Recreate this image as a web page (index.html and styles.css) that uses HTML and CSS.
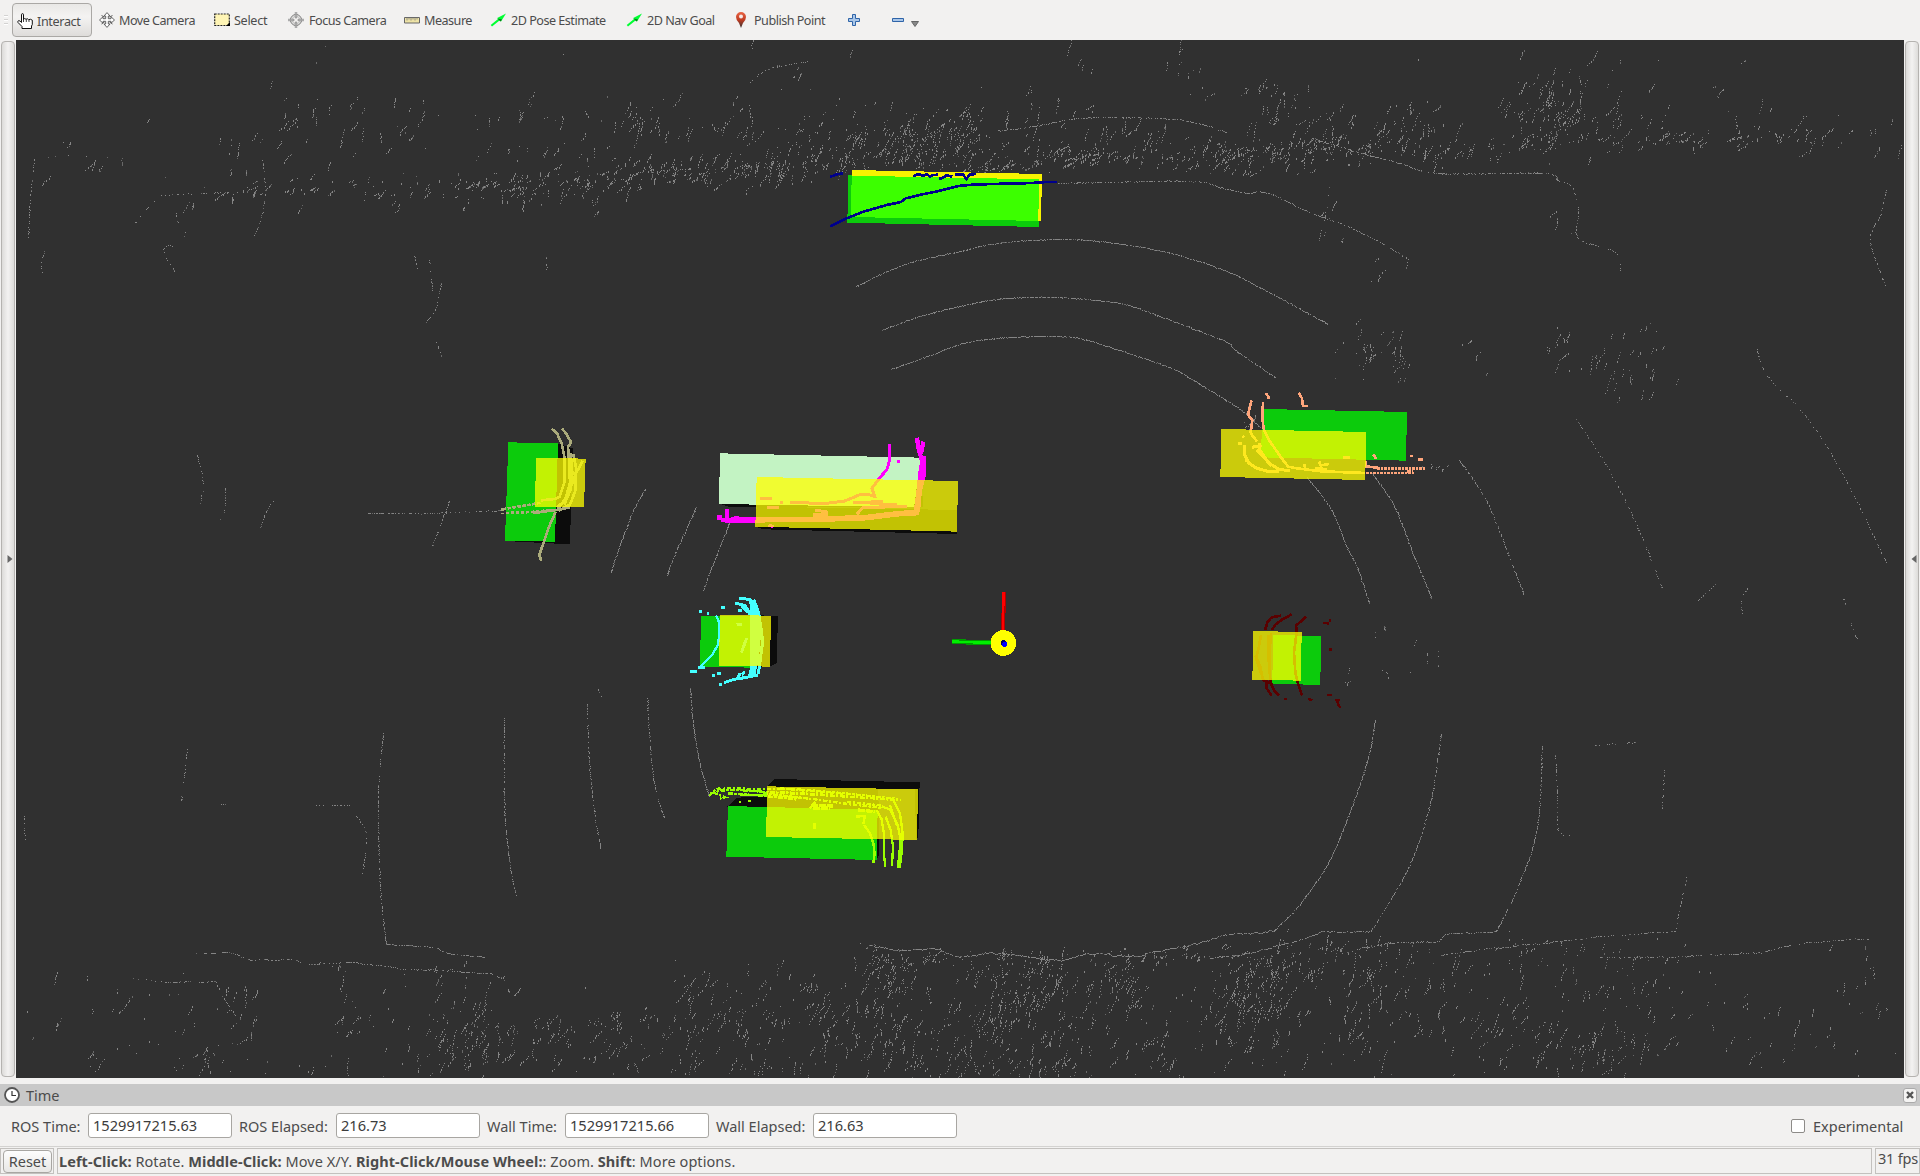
FILE: index.html
```html
<!DOCTYPE html>
<html lang="en">
<head>
<meta charset="utf-8">
<title>RViz</title>
<link rel="stylesheet" href="styles.css">
</head>
<body>
<div class="app">
  <header class="toolbar">
    <div class="grip"><i></i><i></i><i></i></div>
    <button class="tool t-interact active"><svg width="16" height="16" viewBox="0 0 16 16"><path d="M4.5 9.5V1.8Q4.5.6 5.5.6T6.5 1.8V6.5Q7.6 4.6 9 6.3 10.3 5 11.6 6.7 13.5 5.600 15.300 7.200V11.500L14.500 13V15.500H5V13.500L1 9.500Q.3 8 1.800 7.600 3 7.600 4.500 9.500Z" fill="#fff" stroke="#111"/><path d="M6.500 6v3M9.300 6.500V9M12 7v2" stroke="#111" stroke-width=".8"/></svg><span>Interact</span></button>
    <button class="tool t-move"><svg width="16" height="16" viewBox="0 0 16 16" fill="#fff" stroke="#555" stroke-width=".9"><path d="M8 .6 11 4H9.300V6.700H12V4.800L15.500 8 12 11.200V9.300H9.300V12H11L8 15.400 5 12H6.700V9.300H4V11.200L.5 8 4 4.800V6.700H6.700V4H5Z"/><path d="m2.500 3.500 3 1.500M13.500 3.500l-3 1.500M2.500 12l3-2M13.500 12l-3-2"/></svg><span>Move Camera</span></button>
    <button class="tool t-select"><svg width="16" height="16" viewBox="0 0 16 16"><path d="M.7 2h14.600v11.500H.7z" fill="#fff5b5" stroke="#222" stroke-width="1.200" stroke-dasharray="2 1"/><path d="M16 10v4h-4z"/></svg><span>Select</span></button>
    <button class="tool t-focus"><svg width="16" height="16" viewBox="0 0 16 16" fill="none" stroke="#777"><circle cx="8" cy="8" r="5.500"/><circle cx="8" cy="8" r="3.800" stroke="#aaa" stroke-width=".7"/><path d="M7.300 0v6h1.400V0M7.300 16v-6h1.400v6M0 7.300h6v1.400H0M16 7.300h-6v1.400h6" fill="#eee" stroke-width=".7"/></svg><span>Focus Camera</span></button>
    <button class="tool t-measure"><svg width="16" height="16" viewBox="0 0 16 16"><path d="M.5 5.500h15v5.500H.5z" fill="#eee3a6" stroke="#666"/><path d="M3 5.500v3M5 5.500v2M7 5.500v3M9 5.500v2M11 5.500v3M13 5.500v2" stroke="#777" stroke-width=".8"/></svg><span>Measure</span></button>
    <button class="tool t-pose"><svg width="17" height="16" viewBox="0 0 17 16"><path d="M16 1.500 11 9.500 9.500 8.500 2 14.500.7 13 8 7 7.200 6Z" fill="#0f3"/><path d="m7.500 6.500 3 3 1.500-2Z" fill="#087a18"/></svg><span>2D Pose Estimate</span></button>
    <button class="tool t-nav"><svg width="17" height="16" viewBox="0 0 17 16"><path d="M16 1.500 11 9.500 9.500 8.500 2 14.500.7 13 8 7 7.200 6Z" fill="#0f3"/><path d="m7.500 6.500 3 3 1.500-2Z" fill="#087a18"/></svg><span>2D Nav Goal</span></button>
    <button class="tool t-point"><svg width="12" height="16" viewBox="0 0 12 16"><defs><linearGradient id="pin" x2="0" y2="1"><stop stop-color="#ea6545"/><stop offset=".5" stop-color="#bf3c22"/><stop offset="1" stop-color="#333"/></linearGradient></defs><path d="M6 0A5 5 0 0 1 11 5Q11 8 8 11L6 16 4 11Q1 8 1 5A5 5 0 0 1 6 0Z" fill="url(#pin)"/><circle cx="6" cy="4.500" r="2" fill="#f7eae7"/></svg><span>Publish Point</span></button>
    <button class="tool t-add"><svg width="12" height="12" viewBox="0 0 12 12"><path d="M4.500.5h3v4h4v3h-4v4h-3v-4h-4v-3h4z" fill="#a9c6e8" stroke="#2f64a8"/></svg></button>
    <button class="tool t-remove"><svg width="12" height="12" viewBox="0 0 12 12"><path d="M.5 4.500h11v3H.5z" fill="#a9c6e8" stroke="#2f64a8"/></svg><svg class="caret" width="8" height="6" viewBox="0 0 8 6"><path d="M.5.5h7L4 5.500Z" fill="#888" stroke="#666"/></svg></button>
  </header>

  <main class="stage">
    <div class="splitter"><svg width="6" height="8" viewBox="0 0 6 8"><path d="M.5 0 5.500 4 .5 8Z" fill="#666"/></svg></div>
    <div class="viewport">
      <canvas id="cloud" width="1888" height="1038"></canvas>
      <svg class="scene" width="1888" height="1038" viewBox="16 40 1888 1038" fill="none">
        <!-- bus ahead of the vehicle -->
        <g transform="translate(800 150) scale(.33333)">
          <path class="gn-solid" d="M145 76 718 89 716 231 142 218Z"/>
          <path fill="#f8f300" d="M156 60 726 72 723 213 155 200Z"/>
          <path fill="#3cff00" d="M155 77 717 88 715 213 153 201Z"/>
          <g stroke="#00008c" stroke-width="8"><path d="m90 81 20-8 20-3M90 229l50-24 50-20 70-20 43-9 14-11 50-12 50-10 60-15 40-4 60-2 120-3 43-3h30"/><path stroke-width="8" d="m340 79 16-7 12 6 13-6 8 8 12-5 13-1M417 87l12-4 10-7 18 4M464 74l25-1 10 14 10-13 18-2"/></g>
        </g>
        <g transform="translate(480 410) scale(.33333)">
          <!-- car, far left -->
          <path class="bk" d="M233 100 278 115 270 403 75 393Z"/>
          <path class="gn-solid" d="M85 97 234 100 225 395 75 393Z"/>
          <g stroke="#abab7b" stroke-width="8">
            <path d="m215 56 16 14 14 30 9 45v70l-15 45-15 7-40 4" />
            <path d="m246 56 14 16 13 25-9 14 4 50 2 58-15 53-24 20M280 132l8 40-2 70-16 42-35 18M308 152l-22 42-22 60-30 43"/>
            <path d="m272 130 5 60-6 50-18 44"/>
            <path stroke-dasharray="10 5" d="m68 298 116-20M78 309l75-3 62-6M68 293v18"/>
            <path d="m270 292-35 7-75 10M227 305l-22 50-15 45-12 35 6 17"/>
          </g>
          <path class="yl" d="M168 143 317 146 312 292 165 290Z"/>
          <!-- truck -->
          <path class="bk" d="M718 280 745 290 1330 292 1320 150Z"/>
          <path fill="#c3f3c3" d="M720 130 1323 143 1302 292 717 282Z"/>
          <path class="bk" d="m826 350 25 8 580 14V300L830 290Z"/>
          <g stroke="#f0f" stroke-width="9">
            <path d="M1229 102v48l-8 28-23 27-22 30 8 24-24-7-18 1-48 20-54 7-110-2M840 267h36M900 277h10M1251 156h9"/>
            <path stroke-width="13" d="m1311 83 5 34 10 35-5 70-10 70M1330 95l-7 35M1333 137v50l-15 60-4 60"/>
            <path stroke-width="17" d="m1325 175-8 75-8 58-53 3-100 12-150 5-150 1-120 3"/>
            <path stroke-width="14" d="m722 330 130-2M712 322h15M741 298v27M769 318v20"/>
            <path d="M1130 313 1150 292 1280 290M1120 279l90-5M1170 281l80 3M1005 300l40 7M862 293h35M866 345l15 5M1000 315l45-2"/>
          </g>
          <path class="yl" d="M830 201 1434 213 1431 365 826 350Z"/>
        </g>
        <g transform="translate(680 580) scale(.33333)">
          <!-- cyan car -->
          <path class="bk" d="M205 105 294 108 290 250 270 260 205 262Z"/>
          <path class="gn-solid" d="M63 108 220 108 217 263 60 260Z"/>
          <g stroke="#4ff" stroke-width="9">
            <path stroke-width="7" d="m108 106 8 18 2 40-4 30-17 30-20 20-20 20"/>
            <path d="M57 96h8M80 101h8M124 83h12M30 274h20M55 263h20M96 287h8M110 280h12M118 313h9M175 93h10"/>
            <path d="m178 55 30 3 20 17 9 30M166 69l30 8 15 28M184 78l25 22"/>
            <path stroke-width="20" d="m216 60 12 55 4 60-5 60-12 52"/>
            <path stroke-width="18" d="M218 70v215M220 90l15 10"/>
            <path d="m236 100 8 50 4 35-8 60-5 38M132 308l30-10 32-5 40-8M180 279l-7 18M195 276l-10 8M200 174l-8 22-8 22M170 135l17-2"/>
          </g>
          <path class="yl" d="M120 105 273 107 270 260 117 257Z"/>
          <!-- van behind -->
          <path class="bk" d="M285 597 719 607 715 770 708 780 705 628 595 628 598 825 590 838 590 690 142 680 170 653 262 650 262 619Z"/>
          <path class="gn-solid" d="M144 678 593 690 590 840 139 830Z"/>
          <g stroke="#9f0" stroke-width="7">
            <g stroke-dasharray="14 4 7 5"><path d="m88 647 14-15 18-8M92 640l30-8 50-3 100 8 110 6 140 8 140 10"/><path d="m110 628 45-4 80 4 110-1 120 10 190 20M100 638l35 14-15 4M145 640l90 6 120 13M205 664h9M176 667h8M250 640l155 18 105 15 95 10M300 625l190 17M390 685l15-20M500 665l110 12M180 645h80M190 632l60 3M265 650l100 4M300 636l160 10"/></g>
            <path stroke-width="10" stroke-dasharray="20 3" d="m395 675 65 3M400 686l50-2M535 690l50 5M403 730v18"/>
            <path d="m528 710 27-2-5 25M552 735l18 25 10 30 4 30-4 28M590 690l15 28 8 50v65l3 27M617 710l15 40 7 50-3 57M605 680l25 8 24 50 8 40-8 85M640 660l20 40 8 60-2 50-7 53M630 675l20 60"/>
          </g>
          <path class="yl" d="M262 619 714 628 711 780 258 771Z"/>
          <!-- vehicle axes -->
          <path stroke="#009c00" stroke-width="15" d="m816 185 125 3"/><path stroke="#0e0" stroke-width="8" d="m816 185 125 3"/>
          <path stroke="#b00000" stroke-width="12" d="m972 36-3 130"/><path stroke="#f00" stroke-width="7" d="m971 36-3 130"/>
          <circle cx="970" cy="189" r="38.500" fill="#ff0"/><circle cx="970" cy="189" r="8" fill="#000060"/><circle cx="974" cy="193" r="8" fill="#00f"/>
        </g>
        <g transform="translate(1190 370) scale(.33333)">
          <!-- car, front right -->
          <path class="gn-solid" d="M217 117 651 126 648 272 213 262Z"/>
          <g stroke="#ffa57b" stroke-width="8">
            <path d="m185 91-7 25-4 18 13 17-5 35 3 8 16 20M219 97l-2 50 5 33 15 30 38 55 20 25 25 5 75 9 129 5"/>
            <path d="m227 70 10 12-3 5M326 68l10 17 3 23h14M550 253l8 14M661 258h8M684 268h15M460 262h20M387 274l5 12 25-4M343 283l3 15"/>
            <path d="m158 197 4 5M143 220h12M163 225l1 30 12 24 25 16 35 10h30M210 220v20l25 38 30 19 35 6M200 240l45 47M185 232l30-5M165 272h10M375 295l35 3" stroke-width="9"/>
            <path d="m528 272v17l40 5"/><path stroke-dasharray="10 3 5 3" d="M560 296h148M528 309h146M652 305h20"/>
          </g>
          <path class="yl" d="M94 177 528 186 526 330 91 321Z"/>
          <!-- car, right -->
          <path class="gn-solid" d="M249 795 393 798 391 945 247 941Z"/>
          <g stroke="#5a0000" stroke-width="8">
            <path d="m225 780 8-25 12-13 28-5M246 780l10-16 20-15 29-16M349 740l-31 27 2 20-8 60 4 60 10 40 10 30M400 759h12l3 5M416 752h8M418 839h8M213 795l-7 40-7 25 12 30 8 40 25 10M235 795v60l6 75 5 20M230 935l0 20 15 22M240 935l15 30 12 11M282 987h8M355 987l12 4M412 975h13M436 990h14M442 990l3 14 6 9"/>
            <path d="m195 858 12 40 10 25M243 790l-2 70-4 50" stroke-width="5"/>
          </g>
          <path class="yl" d="M190 783 335 786 333 932 187 929Z"/>
        </g>
      </svg>
    </div>
    <div class="splitter"><svg width="6" height="8" viewBox="0 0 6 8"><path d="M5.500 0 .5 4 5.500 8Z" fill="#666"/></svg></div>
  </main>

  <section class="time">
    <div class="time-head"><svg width="16" height="16" viewBox="0 0 16 16"><circle cx="8" cy="8" r="7" fill="#fff" stroke="#555" stroke-width="1.800"/><path d="M8 4v4.500h4" fill="none" stroke="#333" stroke-width="1.200"/></svg><span>Time</span><button class="close"><svg width="8" height="8" viewBox="0 0 8 8"><path d="m1 1 6 6M7 1 1 7" stroke="#555" stroke-width="2.400"/></svg></button></div>
    <div class="time-row">
      <label class="l1">ROS Time:</label><div class="field">1529917215.63</div>
      <label class="l2">ROS Elapsed:</label><div class="field">216.73</div>
      <label class="l3">Wall Time:</label><div class="field">1529917215.66</div>
      <label class="l4">Wall Elapsed:</label><div class="field">216.63</div>
      <div class="experimental"><i></i><span>Experimental</span></div>
    </div>
  </section>
  <footer class="status">
    <div class="cell cell-reset"><button class="reset">Reset</button></div>
    <div class="cell cell-help"><span><b>Left-Click:</b> Rotate. <b>Middle-Click:</b> Move X/Y. <b>Right-Click/Mouse Wheel:</b>: Zoom. <b>Shift</b>: More options.</span></div>
    <div class="cell cell-fps">31 fps</div>
  </footer>
</div>
<script src="cloud.js"></script>
</body>
</html>
```
FILE: styles.css
```css
* { box-sizing: border-box; }
body { margin: 0; background: #f2f1f0; color: #4c4c4c; font-family: "Noto Sans", "Open Sans", sans-serif; font-size: 14.5px; overflow: hidden; }
button { font: inherit; color: inherit; margin: 0; border: 0; background: none; }
.app { width: 1920px; height: 1176px; display: grid; grid-template-rows: 40px 1038px 69px 29px; }

.toolbar { display: flex; align-items: center; font-size: 12.6px; }
.grip { width: 12px; padding-left: 4px; display: flex; flex-direction: column; gap: 2px; }
.grip i { width: 4px; height: 2px; background: #d3d2d1; border-bottom: 1px solid #fff; }
.tool { height: 34px; padding: 0 0 0 5px; display: flex; align-items: center; gap: 4px; white-space: nowrap; letter-spacing: -.5px; }
.tool svg { flex: none; }
.active { border: 1px solid #aaa8a5; border-radius: 4px; background: linear-gradient(#e9e8e6, #f4f3f2 40%, #dedcda); padding: 2px 0 0 4px; }
.t-interact { width: 80px; margin-right: 2px; letter-spacing: -.35px; }
.t-move { width: 115px; }
.t-select { width: 74px; letter-spacing: -.3px; }
.t-focus { width: 116px; gap: 5px; }
.t-measure { width: 86px; }
.t-pose { width: 136px; }
.t-nav { width: 109px; }
.t-point { width: 113px; gap: 7px; }
.t-add { width: 44px; }
.t-remove { width: 40px; gap: 7px; }
.caret { margin-top: 7px; }

.stage { display: grid; grid-template-columns: 16px 1888px 16px; }
.splitter { margin: 1px; border: 1px solid #b5b3b0; border-radius: 4px; background: linear-gradient(90deg, #dcdbd9, #f3f2f1 50%, #dddcda); display: grid; place-items: center; padding-left: 3px; }
.viewport { position: relative; background: #303030; overflow: hidden; }
.viewport canvas { display: block; }
.scene { position: absolute; inset: 0; shape-rendering: crispEdges; }
.gn-solid { fill: #0ccb0c; }
.bk { fill: #0c0c0c; }
.yl { fill: #ff0; fill-opacity: .75; }

.time { padding-top: 6px; border-bottom: 1px solid #d3d2d0; }
.time-head { height: 22px; background: #c8c8c8; display: flex; align-items: center; padding: 0 3px 0 4px; gap: 6px; }
.time-head span { margin-top: -1px; }
.close { margin-left: auto; width: 14px; height: 15px; padding: 0; display: grid; place-items: center; background: #f5f4f3; border: 1px solid #aaa; border-radius: 3px; }
.time-row { display: flex; align-items: center; height: 40px; padding-left: 11px; white-space: nowrap; }
.field { width: 144px; height: 25px; margin-top: -1px; padding-left: 4px; border: 1px solid #a8a6a2; border-radius: 3px; background: #fff; color: #3c3c3c; line-height: 23px; font-size: 14.6px; }
.l1 { width: 77px; }
.l2, .l3, .l4 { padding-left: 7px; }
.l2, .l4 { width: 104px; }
.l3 { width: 85px; }
.experimental { margin-left: auto; margin-right: 15px; display: flex; align-items: center; gap: 8px; }
.experimental span { width: 92px; }
.experimental i { width: 14px; height: 14px; margin-top: -1px; border: 1px solid #8d8b88; border-radius: 2px; background: #fff; }

.status { display: grid; grid-template-columns: 54px 1815px 45px; gap: 3px; height: 27px; padding-top: 1px; }
.cell { height: 26px; border: 1px solid #c3c1be; display: flex; align-items: center; white-space: nowrap; overflow: hidden; }
.cell-reset { padding-left: 2px; }
.reset { width: 49px; height: 23px; padding: 0; border: 1px solid #a8a6a2; border-radius: 4px; background: linear-gradient(#fdfdfd, #e8e7e5); line-height: 20px; }
.cell-help { padding-left: 1px; letter-spacing: .07px; }
.cell-fps { padding: 0 0 7px 2px; letter-spacing: -.2px; }
```
FILE: cloud.js
```js
const ctx = document.getElementById('cloud').getContext('2d');
let seed = 4217;
const rnd = () => (seed = (seed * 16807) % 2147483647) / 2147483647;
const gauss = () => (rnd() + rnd() + rnd() - 1.5) * 1.5;

function dot(x, y, tall) {
  ctx.fillStyle = rnd() < 0.7 ? '#858585' : '#686868';
  ctx.fillRect(Math.round(x) - 16, Math.round(y) - 40, 1, tall ? 2 : 1);
}

// Smooth scan line through [x, y, x, y, ...], drawn with single-pixel returns.
function ring(density, p) {
  const n = p.length / 2;
  const at = (i, k) => p[Math.max(0, Math.min(n - 1, i)) * 2 + k];
  for (let i = 0; i < n - 1; i++) {
    const len = Math.hypot(at(i + 1, 0) - at(i, 0), at(i + 1, 1) - at(i, 1));
    for (let s = 0; s < len; s++) {
      const t = s / len;
      const c = k => 0.5 * (2 * at(i, k) + (at(i + 1, k) - at(i - 1, k)) * t
        + (2 * at(i - 1, k) - 5 * at(i, k) + 4 * at(i + 1, k) - at(i + 2, k)) * t * t
        + (3 * at(i, k) - at(i - 1, k) - 3 * at(i + 1, k) + at(i + 2, k)) * t * t * t);
      if (rnd() < density) dot(c(0) + (rnd() - 0.5) * 0.8, c(1) + (rnd() - 0.5) * 0.8);
    }
  }
}

// Straight scan line with small range noise, for ground edges.
function edge(density, noise, p) {
  let off = 0;
  for (let i = 0; i + 3 < p.length; i += 2) {
    const len = Math.hypot(p[i + 2] - p[i], p[i + 3] - p[i + 1]);
    for (let s = 0; s < len; s++) {
      off = off * 0.9 + (rnd() - 0.5) * noise;
      const t = s / len;
      if (rnd() < density) dot(p[i] + (p[i + 2] - p[i]) * t, p[i + 1] + (p[i + 3] - p[i + 1]) * t + off);
    }
  }
}

// Scattered returns round a segment, in short broken streaks:
// x0, y0, x1, y1, horizontal and vertical spread, count.
function haze(x0, y0, x1, y1, sx, sy, count) {
  let left = count * 0.8;
  while (left > 0) {
    const t = rnd();
    let x = x0 + (x1 - x0) * t + gauss() * sx * 1.25;
    let y = y0 + (y1 - y0) * t + gauss() * sy * 1.1;
    const n = 1 + Math.floor(rnd() * rnd() * 9);
    const dx = (rnd() - 0.6) * 3, dy = 1 + rnd() * 2;
    for (let i = 0; i < n; i++) {
      dot(x, y, rnd() < 0.3);
      x += dx + (rnd() - 0.5) * 2;
      y += (sy < 8 ? 0.4 : 1) * dy * (dx > 0 ? -1 : 1);
    }
    left -= n;
  }
}

[
  [891, 369, 925, 357, 960, 344, 997, 338, 1040, 336, 1079, 338, 1119, 350, 1171, 368, 1193, 380, 1229, 402, 1248, 415, 1260, 427],
  [1307, 477, 1327, 503, 1337, 522, 1348, 550, 1357, 567, 1369, 603],
  [882, 330, 920, 316, 960, 306, 997, 299, 1052, 297, 1119, 303, 1162, 317, 1205, 333, 1229, 343, 1235, 350, 1275, 377],
  [1372, 473, 1392, 502, 1403, 527, 1412, 552, 1420, 570, 1431, 598],
  [856, 286, 905, 264, 960, 251, 997, 243, 1058, 239, 1107, 242, 1162, 251, 1205, 263, 1242, 278, 1278, 297, 1328, 324],
  [645, 489, 632, 513, 617, 553, 611, 572],
  [696, 507, 675, 553, 667, 575],
  [729, 523, 717, 553, 703, 590],
  [1375, 720, 1369, 754, 1353, 803, 1329, 861, 1298, 906, 1273, 931],
  [690, 688, 693, 725, 700, 765, 709, 796]
].forEach(p => ring(0.95, p));

[
  [1057, 183, 1187, 181, 1223, 188, 1248, 193, 1260, 191, 1278, 197, 1309, 212, 1340, 223, 1376, 240, 1408, 259],
  [997, 131, 1040, 125, 1070, 119, 1107, 117, 1174, 119, 1205, 125, 1226, 132],
  [1312, 138, 1358, 152, 1400, 163, 1438, 173, 1542, 173, 1557, 180],
  [1459, 460, 1486, 500, 1510, 559, 1524, 595],
  [1441, 734, 1430, 803, 1408, 868, 1371, 931],
  [1542, 746, 1537, 827, 1518, 886, 1496, 931],
  [647, 697, 650, 747, 655, 789, 664, 817],
  [587, 704, 589, 761, 595, 817, 601, 849],
  [504, 718, 504, 799, 509, 861, 516, 896],
  [383, 733, 378, 796, 380, 886, 386, 944],
  [449, 501, 440, 525, 432, 546]
].forEach(p => ring(0.65, p));

edge(0.9, 1.2, [1273, 931, 1231, 934, 1182, 947, 1155, 951, 1139, 956, 1085, 953, 1060, 960, 990, 953, 960, 956, 930, 948, 905, 951, 869, 946]);
edge(0.75, 0.9, [1371, 931, 1322, 932, 1290, 943, 1249, 953, 1210, 958]);
edge(0.65, 0.7, [1496, 931, 1445, 934, 1438, 941, 1390, 943, 1340, 952]);
edge(0.5, 0.7, [1675, 931, 1600, 936, 1560, 941, 1500, 947, 1440, 955]);
edge(0.45, 0.8, [1870, 939, 1800, 943, 1760, 952, 1690, 956, 1600, 958]);
edge(0.65, 0.3, [386, 944, 435, 947, 447, 953, 484, 957]);
edge(0.45, 0.6, [196, 953, 232, 953, 250, 960, 294, 959, 305, 965, 350, 962, 410, 969, 490, 973, 505, 980]);
edge(0.4, 0.6, [130, 978, 165, 982, 215, 981]);

[
  [1576, 419, 1609, 470, 1640, 533, 1662, 588],
  [1756, 348, 1768, 377, 1805, 415, 1842, 473, 1886, 562],
  [1687, 875, 1680, 905, 1675, 931],
  [187, 749, 184, 775, 181, 802],
  [355, 815, 366, 834, 362, 875],
  [215, 981, 225, 1000, 235, 1015],
  [274, 498, 266, 512, 260, 528], [225, 488, 224, 510, 217, 523], [197, 455, 203, 483, 199, 505],
  [366, 513, 430, 513, 502, 510],
  [441, 283, 436, 307, 425, 323], [435, 340, 444, 362], [414, 256, 417, 268], [546, 256, 547, 275],
  [429, 260, 432, 290],
  [160, 195, 147, 208, 132, 226], [176, 212, 178, 222], [186, 229, 180, 243, 163, 249, 175, 272],
  [262, 160, 265, 190, 261, 218, 254, 235], [45, 250, 41, 262, 42, 272], [34, 158, 30, 200, 28, 240],
  [160, 195, 230, 192], [750, 82, 765, 70, 785, 65, 808, 61],
  [1557, 180, 1572, 187, 1578, 213, 1578, 238, 1615, 252, 1620, 270],
  [1555, 755, 1557, 790, 1558, 830, 1570, 835], [1595, 745, 1635, 742],
  [1664, 770, 1662, 808], [1717, 582, 1698, 600], [1750, 586, 1742, 596, 1742, 616],
  [1843, 598, 1846, 605], [1850, 622, 1857, 639], [1886, 190, 1880, 215, 1870, 240, 1885, 285],
  [1438, 651, 1438, 668], [1427, 653, 1427, 663], [1375, 630, 1376, 642], [1386, 670, 1388, 678],
  [24, 815, 25, 840], [213, 802, 228, 805], [315, 805, 350, 805], [598, 689, 601, 696]
].forEach(p => ring(0.4, p));

[
  // tree line ahead
  [180, 194, 450, 185, 12, 6, 170], [450, 185, 830, 168, 14, 7, 520], [620, 172, 830, 160, 14, 9, 300],
  [40, 160, 110, 160, 20, 12, 45], [180, 165, 450, 140, 40, 28, 170], [450, 150, 850, 135, 30, 26, 380],
  [250, 118, 860, 110, 30, 15, 110], [490, 200, 600, 195, 20, 10, 80], [340, 205, 450, 195, 30, 8, 40],
  [280, 125, 310, 125, 8, 9, 25], [635, 125, 645, 130, 8, 14, 50], [820, 150, 960, 150, 20, 14, 420],
  [880, 130, 960, 135, 20, 16, 220], [955, 118, 975, 150, 8, 12, 120], [775, 67, 800, 72, 6, 4, 16],
  [970, 168, 1140, 153, 14, 5, 340], [960, 145, 1220, 145, 20, 12, 260], [1010, 105, 1080, 110, 25, 12, 80],
  [1170, 160, 1350, 148, 14, 7, 300], [1220, 153, 1440, 150, 14, 9, 280], [1230, 171, 1315, 171, 8, 2, 45],
  [1260, 128, 1440, 128, 18, 20, 240], [1280, 90, 1290, 125, 9, 8, 60], [1400, 105, 1430, 140, 8, 14, 60],
  [1070, 60, 1085, 65, 8, 10, 18], [1170, 55, 1215, 95, 8, 8, 40], [1250, 88, 1275, 88, 5, 2, 18],
  [1440, 150, 1600, 135, 12, 8, 170], [1500, 115, 1600, 115, 20, 26, 250], [1530, 95, 1560, 145, 10, 10, 80],
  [1600, 145, 1800, 136, 14, 6, 180], [1600, 125, 1830, 130, 24, 14, 110], [1820, 120, 1890, 140, 12, 12, 50],
  [1540, 80, 1660, 100, 40, 20, 40], [1700, 82, 1725, 91, 1, 1, 10], [1000, 55, 1850, 70, 100, 18, 18],
  [40, 60, 900, 75, 80, 20, 18],
  // roadside
  [1330, 195, 1330, 240, 8, 10, 35], [1360, 270, 1410, 265, 10, 8, 18], [1335, 350, 1415, 355, 16, 16, 60],
  [1395, 350, 1410, 390, 3, 8, 35], [1355, 340, 1375, 360, 6, 10, 30], [1460, 330, 1488, 380, 6, 6, 18],
  [1545, 320, 1560, 360, 8, 14, 50], [1600, 360, 1655, 380, 14, 16, 90], [1620, 330, 1655, 340, 14, 12, 35],
  [1550, 200, 1580, 235, 6, 10, 16], [1245, 410, 1250, 425, 4, 6, 22], [1420, 465, 1445, 467, 6, 2, 18],
  [1345, 670, 1400, 690, 14, 16, 9], [1380, 640, 1440, 650, 14, 14, 5],
  // vegetation behind
  [860, 952, 960, 958, 8, 6, 90], [870, 962, 900, 965, 10, 9, 90], [880, 985, 905, 985, 14, 14, 130],
  [970, 970, 1060, 965, 22, 12, 160], [1080, 960, 1240, 953, 14, 6, 160], [980, 1000, 1070, 1005, 26, 28, 480],
  [960, 1055, 1060, 1050, 30, 20, 260], [1110, 985, 1150, 975, 20, 18, 170], [1240, 980, 1310, 960, 20, 16, 250],
  [1230, 1010, 1290, 1010, 20, 26, 400], [1330, 965, 1420, 960, 24, 16, 170], [1350, 1010, 1420, 1010, 34, 30, 260],
  [1480, 1030, 1560, 1040, 36, 26, 260], [1570, 1045, 1640, 1050, 28, 22, 180], [1470, 960, 1600, 970, 40, 18, 140],
  [1610, 980, 1690, 985, 30, 24, 100], [1700, 1030, 1860, 1030, 40, 28, 130], [1840, 960, 1880, 980, 14, 20, 40],
  [1100, 1030, 1200, 1050, 60, 30, 200], [870, 1030, 940, 1050, 30, 24, 260], [740, 1010, 870, 1000, 40, 22, 280],
  [700, 1040, 850, 1050, 50, 24, 240], [700, 975, 730, 1005, 14, 14, 70], [550, 1035, 680, 1040, 40, 24, 340],
  [430, 1000, 500, 1020, 24, 24, 190], [440, 1040, 480, 1050, 24, 18, 150], [340, 1000, 370, 1030, 14, 20, 60],
  [220, 990, 250, 1030, 10, 18, 60], [200, 1050, 250, 1065, 20, 12, 55], [40, 1010, 210, 1020, 30, 24, 70],
  [40, 1060, 600, 1065, 60, 12, 120], [700, 1070, 1500, 1068, 60, 10, 170], [260, 964, 480, 974, 20, 3, 30]
].forEach(h => haze(...h));
```
